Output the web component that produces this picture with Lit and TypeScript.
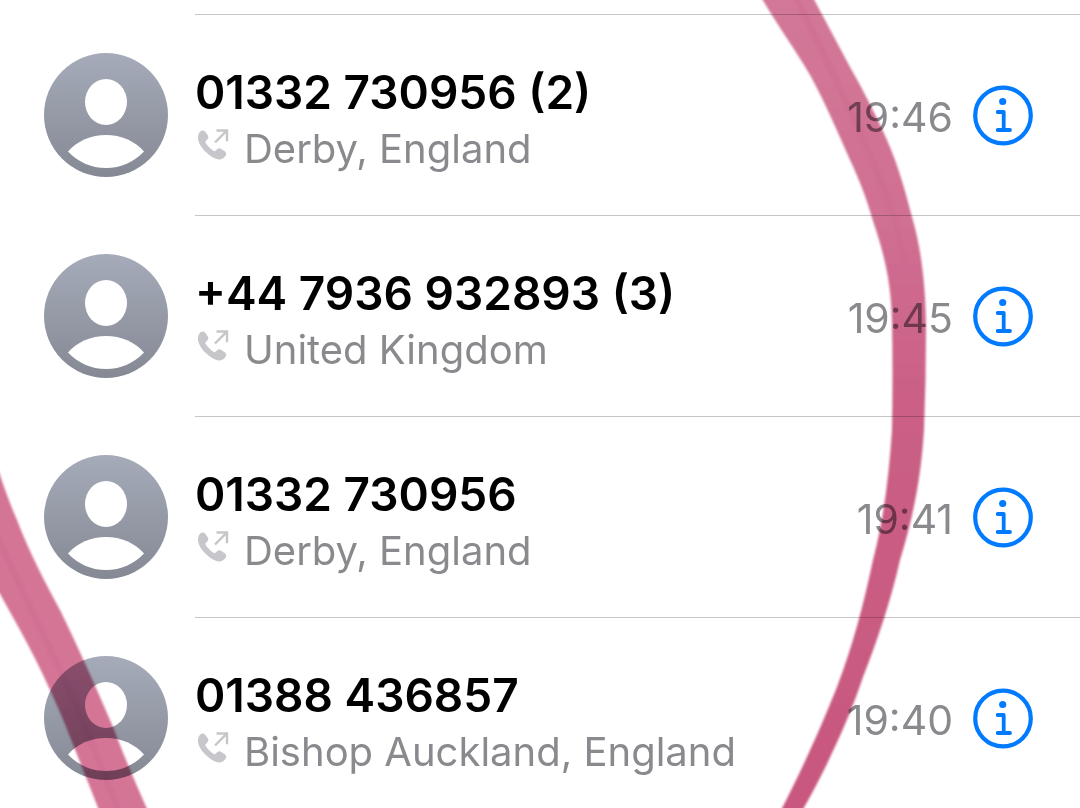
import { LitElement, html, css, svg } from "lit";
import { customElement, property } from "lit/decorators.js";

interface Call {
  number: string;
  place: string;
  time: string;
}

const calls: Call[] = [
  { number: "01332 730956 (2)", place: "Derby, England", time: "19:46" },
  { number: "+44 7936 932893 (3)", place: "United Kingdom", time: "19:45" },
  { number: "01332 730956", place: "Derby, England", time: "19:41" },
  { number: "01388 436857", place: "Bishop Auckland, England", time: "19:40" },
];

@customElement("call-row")
class CallRow extends LitElement {
  @property({ attribute: false }) call!: Call;

  static styles = css`
    :host {
      display: flex;
      padding-left: 44px;
      gap: 27px;
      height: 201px;
      box-sizing: border-box;
    }
    .avatar {
      flex: none;
      width: 124px;
      height: 124px;
      margin-top: 39px;
    }
    .body {
      flex: 1;
      min-width: 0;
      display: flex;
      align-items: center;
      border-top: 1px solid #c6c6c8;
      padding-right: 44px;
    }
    .text {
      flex: 1;
      min-width: 0;
      white-space: nowrap;
      padding-top: 10px;
    }
    .number {
      font-size: 46px;
      line-height: 58px;
      font-weight: 600;
      color: #000;
    }
    .detail {
      display: flex;
      gap: 14px;
      padding-left: 1px;
      font-size: 40px;
      line-height: 56px;
      color: #8a8a8e;
    }
    .outgoing {
      flex: none;
      width: 34px;
      height: 34px;
      margin-top: 7px;
    }
    .time {
      font-size: 41px;
      line-height: 48px;
      color: #8a8a8e;
      margin-right: 17px;
      padding-top: 4px;
    }
    .info {
      flex: none;
      display: block;
      width: 66px;
      height: 66px;
      padding: 0;
      border: 0;
      background: none;
    }
    .info svg {
      display: block;
    }
  `;

  render() {
    const { number, place, time } = this.call;
    return html`
      <svg class="avatar" viewBox="0 0 124 124" aria-hidden="true">
        <defs>
          <linearGradient id="shade" x1="0" y1="0" x2="0" y2="1">
            <stop offset="0" stop-color="#a5abb9" />
            <stop offset="1" stop-color="#858994" />
          </linearGradient>
        </defs>
        <circle cx="62" cy="62" r="62" fill="url(#shade)" />
        <ellipse cx="62" cy="49" rx="21" ry="23" fill="#fff" />
        <path d="M24 98.500C33 88 47 82 62 82s29 6 38 16.500C90 109 77 115 62 115s-28-6-38-16.500Z" fill="#fff" />
      </svg>
      <div class="body">
        <div class="text">
          <div class="number">${number}</div>
          <div class="detail">
            <svg class="outgoing" viewBox="0 0 34 34" aria-hidden="true">
              <path
                d="M4.500 3.300C6.200 1.900 8 2.200 9.200 3.700l2.500 3.600c1.100 1.600 .8 3-.6 4.400l-1.300 1.400c-.5 .6-.5 1.100-.1 1.800 .9 1.500 2.100 3 3.500 4.400 1.400 1.400 3 2.700 4.500 3.600 .7 .4 1.200 .4 1.800-.1l1.400-1.300c1.400-1.400 2.800-1.600 4.400-.6l3.700 2.600c1.500 1.200 1.700 2.800 .4 4.500-1.700 2.400-3.700 3.500-6.300 3.400-4-.1-9.200-3.300-13.500-7.600S2.100 14.500 2 10.200C1.900 7.400 2.600 5 4.500 3.300Z"
                fill="#c7c7cb"
              />
              <path d="M19 14.500 30.500 2.800M20.500 2.500H31v10.800" fill="none" stroke="#c7c7cb" stroke-width="2.400" />
            </svg>
            <span>${place}</span>
          </div>
        </div>
        <time class="time">${time}</time>
        <button class="info" aria-label="Details for ${number}">
          <svg viewBox="0 0 66 66" width="66" height="66">
            <circle cx="33" cy="33.500" r="27.800" fill="none" stroke="#007aff" stroke-width="4.200" />
            <circle cx="32.700" cy="19.500" r="3.600" fill="#007aff" />
            <path d="M27.700 30h6v18M27.700 48h12.300" fill="none" stroke="#007aff" stroke-width="3.800" stroke-linecap="round" stroke-linejoin="round" />
          </svg>
        </button>
      </div>
    `;
  }
}

@customElement("app-root")
class AppRoot extends LitElement {
  static styles = css`
    :host {
      display: block;
      position: relative;
      height: 100vh;
      overflow: hidden;
      background: #fff;
      font-family: Inter, "Liberation Sans", sans-serif;
    }
    .list {
      list-style: none;
      margin: 0;
      padding: 14px 0 0;
    }
    .marker {
      position: absolute;
      inset: 0;
      width: 100%;
      height: 100%;
      pointer-events: none;
      mix-blend-mode: multiply;
    }
  `;

  render() {
    return html`
      <ul class="list">
        ${calls.map((call) => html`<li><call-row .call=${call}></call-row></li>`)}
      </ul>
      <svg class="marker" viewBox="0 0 1080 808" preserveAspectRatio="none" aria-hidden="true">
        <defs>
          <linearGradient id="ink" gradientUnits="userSpaceOnUse" x1="0" y1="0" x2="0" y2="808">
            <stop offset="0" stop-color="#d37898" />
            <stop offset=".28" stop-color="#d06f92" />
            <stop offset=".5" stop-color="#cb5f86" />
            <stop offset="1" stop-color="#c8587f" />
          </linearGradient>
          <filter id="soft" x="-5%" y="-5%" width="110%" height="110%">
            <feGaussianBlur stdDeviation="1" />
          </filter>
        </defs>
        ${svg`
          <g filter="url(#soft)">
            <path fill="url(#ink)" d="M757 -10C775 22 793 46 810 75C824 100 838 133 850 160C860 181 867 200 873 221C885 256 891 284 892 320Q893 375 892 430C889 475 884 518 873 560C864 603 853 645 837 687C821 727 803 768 777 818H798C811 796 821 777 832 753C844 728 854 704 863 677C878 639 891 600 900 560C913 518 921 478 924 430Q926 380 926 330C926 292 922 250 912 217C905 190 898 165 887 140C876 115 863 90 850 67L809 -10Z" />
            <path fill="#d57596" d="M-10 448L0 475C5 490 10 504 17 520C30 554 45 582 60 610C78 647 96 687 113 727C124 756 136 784 151 818H102C91 790 82 767 70 737C64 721 57 705 50 690C41 670 31 650 20 630L-10 576Z" />
          </g>
          <g fill="none" stroke="#cc6a8e" stroke-opacity=".4" stroke-width="7" filter="url(#soft)">
            <path d="M792 -10C822 50 848 104 865 144C884 186 901 230 906 275" />
            <path d="M-10 520C20 590 55 655 78 710L122 818" />
          </g>
        `}
      </svg>
    `;
  }
}
